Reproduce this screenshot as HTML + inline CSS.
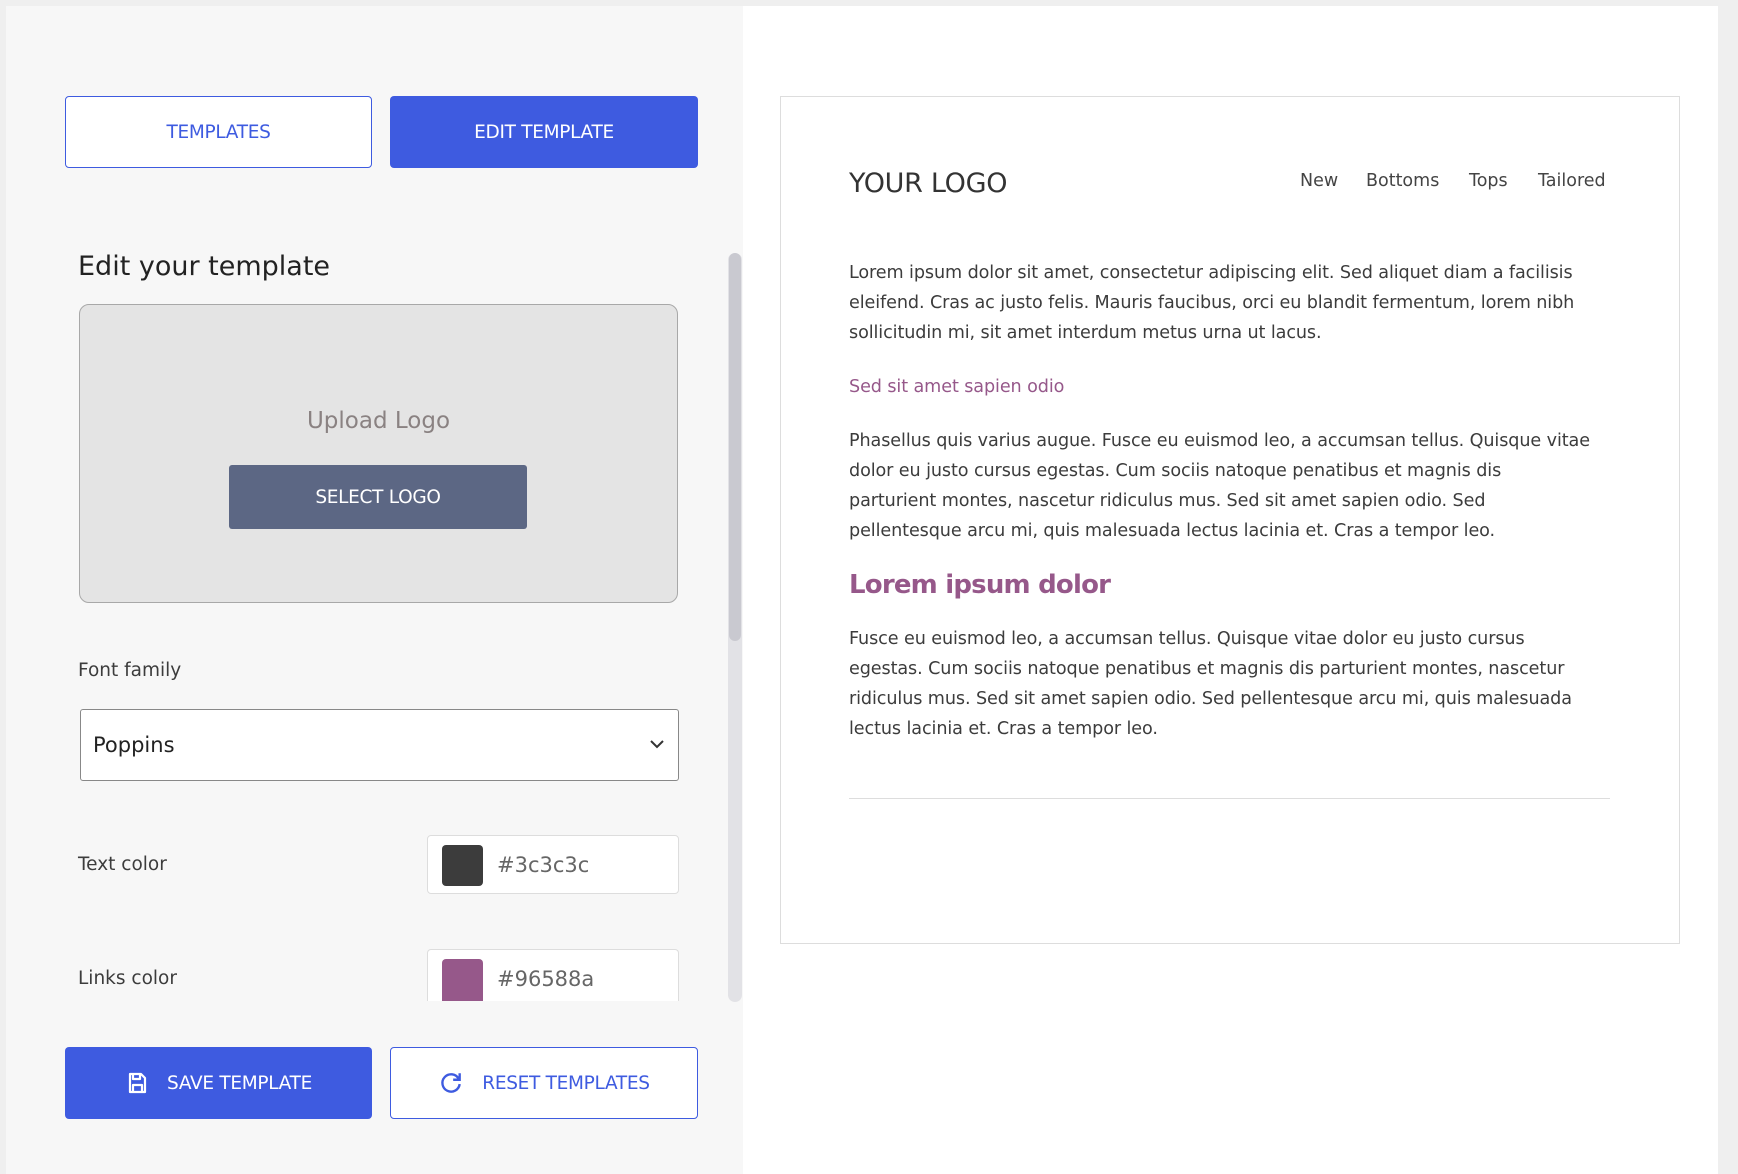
<!DOCTYPE html>
<html><head><meta charset="utf-8"><style>
*{box-sizing:border-box;margin:0;padding:0}
body{width:1738px;height:1174px;background:#efefef;position:relative;overflow:hidden;font-family:"DejaVu Sans","Liberation Sans",sans-serif;color:#3c3c3c}
.a{position:absolute}
.left{left:6px;top:6px;width:737px;height:1168px;background:#f7f7f7}
.right{left:743px;top:6px;width:975px;height:1168px;background:#fff}
.btn{display:flex;align-items:center;justify-content:center;font-size:18.5px;border-radius:4px;white-space:nowrap;letter-spacing:-.3px}
.blue{background:#3e5be0;color:#fff}
.out{border:1px solid #3e5be0;color:#3e5be0;background:#fff}
.lbl{font-size:18.5px;color:#3c3c3c;white-space:nowrap}
.p{font-size:17.6px;line-height:30px;white-space:nowrap;color:#3c3c3c;letter-spacing:-.1px}
</style></head><body>
<div class="a left"></div>
<div class="a right"></div>

<div class="a btn out" style="left:65px;top:96px;width:307px;height:72px">TEMPLATES</div>
<div class="a btn blue" style="left:390px;top:96px;width:308px;height:72px">EDIT TEMPLATE</div>

<div class="a" style="left:78px;top:251px;font-size:27px;color:#222;white-space:nowrap">Edit your template</div>

<div class="a" style="left:79px;top:304px;width:599px;height:299px;background:#e4e4e4;border:1px solid #a8a8a8;border-radius:10px"></div>
<div class="a" style="left:79px;top:408px;width:599px;text-align:center;font-size:23px;color:#8a8282">Upload Logo</div>
<div class="a btn" style="left:229px;top:465px;width:298px;height:64px;background:#5c6784;color:#fff;border-radius:3px">SELECT LOGO</div>

<div class="a" style="left:728px;top:253px;width:14px;height:749px;background:#e2e2e6;border-radius:7px"></div>
<div class="a" style="left:729px;top:253px;width:12px;height:388px;background:#c9c9d0;border-radius:6px"></div>

<div class="a lbl" style="left:78px;top:660px">Font family</div>
<div class="a" style="left:80px;top:709px;width:599px;height:72px;background:#fff;border:1px solid #888;border-radius:3px"></div>
<div class="a" style="left:93px;top:733px;font-size:21px;color:#222">Poppins</div>
<svg class="a" style="left:648px;top:737px" width="18" height="14" viewBox="0 0 18 14"><path d="M3 4l6 6 6-6" fill="none" stroke="#333" stroke-width="2"/></svg>

<div class="a lbl" style="left:78px;top:854px">Text color</div>
<div class="a" style="left:427px;top:835px;width:252px;height:59px;background:#fff;border:1px solid #ddd;border-radius:4px"></div>
<div class="a" style="left:442px;top:845px;width:41px;height:41px;background:#3c3c3c;border-radius:4px"></div>
<div class="a" style="left:497px;top:853px;font-size:21px;color:#666">#3c3c3c</div>

<div class="a lbl" style="left:78px;top:968px">Links color</div>
<div class="a" style="left:427px;top:949px;width:252px;height:52px;background:#fff;border:1px solid #ddd;border-bottom:none;border-radius:4px 4px 0 0"></div>
<div class="a" style="left:442px;top:959px;width:41px;height:42px;background:#96588a;border-radius:4px 4px 0 0"></div>
<div class="a" style="left:497px;top:967px;font-size:21px;color:#666">#96588a</div>

<div class="a btn blue" style="left:65px;top:1047px;width:307px;height:72px">
<svg width="24" height="24" viewBox="0 0 24 24" style="margin-right:18px"><path d="M5 3h11l4 4v14H5z M8 3v5h7V3 M8 21v-7h9v7" fill="none" stroke="#fff" stroke-width="2.2" stroke-linejoin="round"/></svg>SAVE TEMPLATE</div>
<div class="a btn out" style="left:390px;top:1047px;width:308px;height:72px">
<svg width="26" height="26" viewBox="0 0 24 24" style="margin-right:18px"><path d="M19 8A8 8 0 1 0 20 13" fill="none" stroke="#3e5be0" stroke-width="2.2"/><path d="M20 3v6h-6" fill="none" stroke="#3e5be0" stroke-width="2.2"/></svg>RESET TEMPLATES</div>

<div class="a" style="left:780px;top:96px;width:900px;height:848px;border:1px solid #ddd;background:#fff"></div>
<div class="a" style="left:849px;top:168px;font-size:27px;color:#333;white-space:nowrap;letter-spacing:-.3px">YOUR LOGO</div>
<div class="a" style="left:1300px;top:171px;font-size:17.5px;color:#444;white-space:nowrap">New</div>
<div class="a" style="left:1366px;top:171px;font-size:17.5px;color:#444;white-space:nowrap">Bottoms</div>
<div class="a" style="left:1469px;top:171px;font-size:17.5px;color:#444;white-space:nowrap">Tops</div>
<div class="a" style="left:1538px;top:171px;font-size:17.5px;color:#444;white-space:nowrap">Tailored</div>

<div class="a p" style="left:849px;top:258px">Lorem ipsum dolor sit amet, consectetur adipiscing elit. Sed aliquet diam a facilisis<br>eleifend. Cras ac justo felis. Mauris faucibus, orci eu blandit fermentum, lorem nibh<br>sollicitudin mi, sit amet interdum metus urna ut lacus.</div>
<div class="a p" style="left:849px;top:372px;color:#96588a">Sed sit amet sapien odio</div>
<div class="a p" style="left:849px;top:426px">Phasellus quis varius augue. Fusce eu euismod leo, a accumsan tellus. Quisque vitae<br>dolor eu justo cursus egestas. Cum sociis natoque penatibus et magnis dis<br>parturient montes, nascetur ridiculus mus. Sed sit amet sapien odio. Sed<br>pellentesque arcu mi, quis malesuada lectus lacinia et. Cras a tempor leo.</div>
<div class="a" style="left:849px;top:570px;font-size:26px;font-weight:bold;color:#96588a;white-space:nowrap;letter-spacing:-.8px">Lorem ipsum dolor</div>
<div class="a p" style="left:849px;top:624px">Fusce eu euismod leo, a accumsan tellus. Quisque vitae dolor eu justo cursus<br>egestas. Cum sociis natoque penatibus et magnis dis parturient montes, nascetur<br>ridiculus mus. Sed sit amet sapien odio. Sed pellentesque arcu mi, quis malesuada<br>lectus lacinia et. Cras a tempor leo.</div>
<div class="a" style="left:849px;top:798px;width:761px;height:1px;background:#ddd"></div>
</body></html>
